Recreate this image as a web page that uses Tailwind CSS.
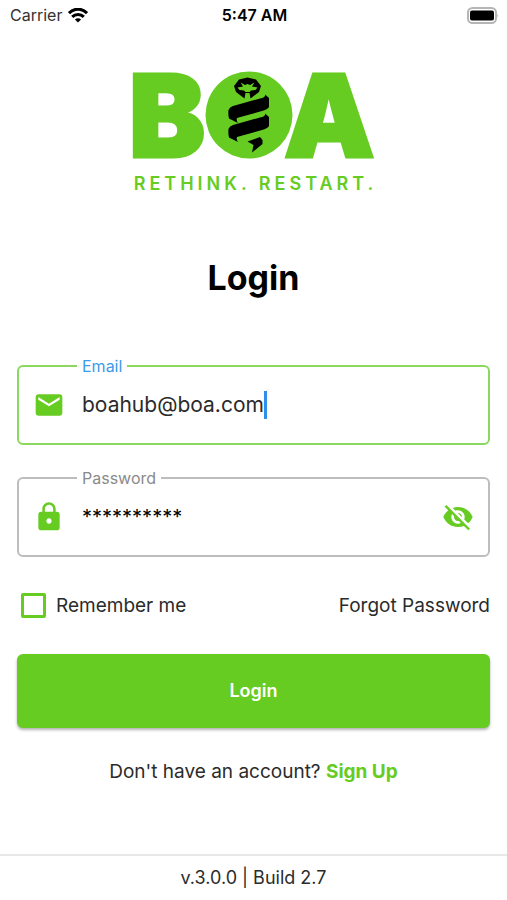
<!DOCTYPE html>
<html lang="en">
<head>
    <meta charset="UTF-8">
    <meta name="viewport" content="width=device-width, initial-scale=1.0">
    <script src="https://cdn.jsdelivr.net/npm/@tailwindcss/browser@4"></script>
    <title>BOA Login</title>
</head>
<body class="min-h-screen flex flex-col bg-white font-['Inter',sans-serif] text-[#2b2b2b]">

    <!-- Status Bar -->
    <header class="grid grid-cols-3 items-center h-[30px] pl-[10px] pr-2 text-base text-[#333]">
        <div class="flex items-center gap-[6px]">
            <span>Carrier</span>
            <svg class="w-5 h-[15px]" viewBox="0 0 20 15" fill="none" stroke="#000" stroke-width="3">
                <path d="M1 5.200C6-.2 14-.2 19 5.200"/>
                <path d="M4.200 8.900C7.400 5.600 12.600 5.600 15.800 8.900"/>
                <path d="M10 14.500L6.900 11.500Q10 9 13.100 11.500Z" fill="#000" stroke="none"/>
            </svg>
        </div>
        <span class="text-center font-semibold text-black">5:47 AM</span>
        <svg class="justify-self-end w-8 h-[17px]" viewBox="0 0 32 17">
            <rect x="1" y="1" width="28" height="15" rx="4.500" fill="#fff" stroke="#b5b5b5" stroke-width="2"/>
            <rect x="3" y="3.500" width="24" height="10" rx="2" fill="#000"/>
            <path d="M30.500 6.500q1.500 2 0 4z" fill="#b5b5b5"/>
        </svg>
    </header>

    <main class="flex-1 px-[17px]">

        <!-- Logo -->
        <div class="flex flex-col items-center pt-10">
            <svg class="w-[246px] h-[90px] overflow-visible" viewBox="0 0 246 90" role="img" aria-label="BOA">
                <g fill="#66cc22" stroke="#66cc22" stroke-width="3" font-family="Inter, sans-serif" font-weight="900" font-size="114">
                    <text x="-2" y="87">B</text>
                    <text x="153" y="87">A</text>
                </g>
                <circle cx="118" cy="45" r="45" fill="#fff"/>
                <circle cx="118" cy="45" r="43.500" fill="#66cc22"/>
                <!-- Snake -->
                <g fill="#000">
                    <path d="M116.500 7.500L125 9.500L130 16L128 22L119.500 28.500L118.500 23H114.500L113.500 28.500L105 22L103 16L108 9.500Z"/>
                    <path fill="#66cc22" d="M109.500 12.500L114 15L116.500 14L119 15L123.500 12.500L121 16.500L126.500 17.500L124.500 20L120 20.500L118.500 22H114.500L113 20.500L108.500 20L106.500 17.500L112 16.500Z"/>
                    <path d="M97.500 40Q98.500 37 102 36L129 28.500Q135 27.500 134 24.500L138 28V37Q136.500 39.500 131 41L106 48Q105 50 107 53L98 48.500Q97 44 97.500 40Z"/>
                    <path d="M97.500 59Q98.500 56 102 55L129 47.500Q135 46.500 134 43.500L138 47V56Q136.500 58.500 131 60L106 67Q105 69 107 72L98 67.500Q97 63 97.500 59Z"/>
                    <path d="M116.500 71.500L129 67L131.500 70V74L121 82.500L122.500 75Z"/>
                </g>
            </svg>
            <p class="mt-3 pl-1 text-lg leading-6 font-semibold tracking-[4px] text-[#66cc22]">RETHINK. RESTART.</p>
        </div>

        <h1 class="mt-15 text-center text-[34px] leading-[44px] font-bold text-black">Login</h1>

        <form class="mt-[57px]" onsubmit="return false">

            <!-- Email Field -->
            <fieldset class="h-[88px] px-[14px] border-2 border-[#8bd860] rounded-md">
                <legend class="ml-[44px] px-[5px] text-base leading-[18px] text-[#3d9be9]"><label for="email">Email</label></legend>
                <div class="flex items-center h-[60px]">
                    <svg class="w-8 h-8 mr-[17px]" viewBox="0 0 24 24" fill="#66cc22"><path d="M20 4H4c-1.100 0-1.990.9-1.990 2L2 18c0 1.100.9 2 2 2h16c1.100 0 2-.9 2-2V6c0-1.100-.9-2-2-2zm0 4l-8 5-8-5V6l8 5 8-5v2z"/></svg>
                    <input type="email" id="email" name="email" value="boahub@boa.com" class="field-sizing-content text-[21px] leading-7 outline-none">
                    <span class="w-[3px] h-7 bg-[#2f8fea]"></span>
                </div>
            </fieldset>

            <!-- Password Field -->
            <fieldset class="mt-6 h-[88px] px-[14px] border-2 border-[#bdbdbd] rounded-md">
                <legend class="ml-[44px] px-[5px] text-base leading-[18px] text-[#8a8a8a]"><label for="password">Password</label></legend>
                <div class="flex items-center h-[60px]">
                    <svg class="w-8 h-8 mr-[17px]" viewBox="0 0 24 24" fill="#66cc22"><path d="M18 8h-1V6c0-2.760-2.240-5-5-5S7 3.240 7 6v2H6c-1.100 0-2 .9-2 2v10c0 1.100.9 2 2 2h12c1.100 0 2-.9 2-2V10c0-1.100-.9-2-2-2zm-6 9c-1.100 0-2-.9-2-2s.9-2 2-2 2 .9 2 2-.9 2-2 2zm3.100-9H8.900V6c0-1.710 1.390-3.100 3.100-3.100s3.100 1.390 3.100 3.100v2z"/></svg>
                    <input type="text" id="password" name="password" value="**********" class="flex-1 min-w-0 text-xl leading-7 text-black outline-none">
                    <button type="button" aria-label="Show password">
                        <svg class="w-8 h-8" viewBox="0 0 24 24" fill="#66cc22"><path d="M12 7c2.760 0 5 2.240 5 5 0 .65-.13 1.260-.36 1.830l2.920 2.920c1.510-1.260 2.700-2.890 3.430-4.750-1.730-4.390-6-7.500-11-7.500-1.400 0-2.740.25-3.980.7l2.160 2.160C10.740 7.130 11.350 7 12 7zM2 4.270l2.280 2.280.46.46C3.080 8.300 1.780 10.020 1 12c1.730 4.390 6 7.500 11 7.500 1.550 0 3.030-.3 4.380-.84l.42.42L19.730 22 21 20.730 3.270 3 2 4.270zM7.530 9.800l1.550 1.550c-.05.21-.08.43-.08.65 0 1.660 1.340 3 3 3 .22 0 .44-.03.65-.08l1.550 1.550c-.67.33-1.410.53-2.200.53-2.760 0-5-2.240-5-5 0-.79.2-1.530.53-2.200zm4.310-.78l3.150 3.150.02-.16c0-1.660-1.340-3-3-3l-.17.01z"/></svg>
                    </button>
                </div>
            </fieldset>

            <div class="flex items-center justify-between mt-9 pl-1 text-[19px] leading-6">
                <div class="flex items-center gap-[10px]">
                    <input type="checkbox" id="remember" name="remember" class="appearance-none w-[25px] h-[25px] border-[3px] border-[#66cc22] rounded-xs checked:bg-[#66cc22]">
                    <label for="remember">Remember me</label>
                </div>
                <a href="#">Forgot Password</a>
            </div>

            <button type="submit" class="w-full h-[74px] mt-9 bg-[#66cc22] rounded-md shadow-[0_2px_3px_rgba(0,0,0,0.3)] text-lg font-semibold text-white">Login</button>
        </form>

        <p class="mt-8 text-center text-[19px] leading-6">Don't have an account? <a href="#" class="font-bold text-[#66cc22]">Sign Up</a></p>
    </main>

    <footer class="h-[46px] border-t-2 border-[#e8e8e8] text-center text-lg leading-[44px]">v.3.0.0 | Build 2.7</footer>

</body>
</html>
